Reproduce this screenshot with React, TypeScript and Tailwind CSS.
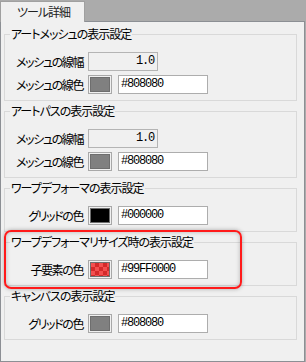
import React from 'react';

const jp = "font-['Noto_Sans_CJK_JP','Noto_Sans',sans-serif] [font-feature-settings:'palt']";
const mono = "font-['Liberation_Mono',monospace] text-[12px] tracking-[-1.2px]";

function Swatch({ fill }: { fill: string }) {
  return (
    <div className="w-[24px] h-[19px] border border-[#a8a8a8] bg-[#f0f0f0] p-[1px] shrink-0">
      <div className={`w-full h-full border border-[#6e6e6e] ${fill}`} />
    </div>
  );
}

function ColorRow({ label, fill, value }: { label: string; fill: string; value: string }) {
  return (
    <div className="flex items-center h-[19px]">
      <div className={`w-[78px] text-right text-[12px] tracking-[-1.4px] leading-[19px] text-black ${jp}`}>{label}</div>
      <div className="ml-[5px] flex items-center gap-[6px]">
        <Swatch fill={fill} />
        <div className={`w-[90px] h-[19px] border border-[#adadad] bg-white pl-[2px] leading-[17px] text-black ${mono}`}>
          {value}
        </div>
      </div>
    </div>
  );
}

function WidthRow({ label, value }: { label: string; value: string }) {
  return (
    <div className="flex items-center h-[19px]">
      <div className={`w-[78px] text-right text-[12px] tracking-[-1.4px] leading-[19px] text-black ${jp}`}>{label}</div>
      <div className={`ml-[5px] w-[70px] h-[19px] border border-[#b4b4b4] bg-[#f0f0f0] pr-[3px] text-right leading-[17px] text-black ${mono}`}>
        {value}
      </div>
    </div>
  );
}

function Group({ title, children }: { title: string; children: React.ReactNode }) {
  return (
    <fieldset className="w-[293px] border border-[#d9d9d9] pt-[11px] pb-[6px] flex flex-col gap-[4px]">
      <legend className={`ml-[5px] px-[1px] text-[12px] tracking-[-1px] leading-[14px] text-black ${jp}`}>{title}</legend>
      {children}
    </fieldset>
  );
}

export default function App() {
  return (
    <div className="relative w-[306px] h-[362px] bg-[#ababab] overflow-hidden">
      {/* tab strip */}
      <div className="h-[22px] flex items-end">
        <div className={`w-[85px] h-[21px] bg-[#f0f0f0] border-t border-l border-r border-[#a0a0a0] pl-[16px] text-[12px] tracking-[-1px] leading-[20px] text-[#222] ${jp}`}>
          ツール詳細
        </div>
      </div>

      {/* panel */}
      <div className="w-[305px] h-[340px] bg-[#f0f0f0] border border-[#8c8f94] border-t-0 pl-[3px] pt-[5px] flex flex-col gap-[3px]">
        <Group title="アートメッシュの表示設定">
          <WidthRow label="メッシュの線幅" value="1.0" />
          <ColorRow label="メッシュの線色" fill="bg-[#808080]" value="#808080" />
        </Group>
        <Group title="アートパスの表示設定">
          <WidthRow label="メッシュの線幅" value="1.0" />
          <ColorRow label="メッシュの線色" fill="bg-[#808080]" value="#808080" />
        </Group>
        <Group title="ワープデフォーマの表示設定">
          <ColorRow label="グリッドの色" fill="bg-[#000000]" value="#000000" />
        </Group>
        <Group title="ワープデフォーマリサイズ時の表示設定">
          <ColorRow
            label="子要素の色"
            fill="bg-[conic-gradient(#d42a2a_25%,#f25050_0_50%,#d42a2a_0_75%,#f25050_0)] [background-size:8px_8px]"
            value="#99FF0000"
          />
        </Group>
        <Group title="キャンバスの表示設定">
          <ColorRow label="グリッドの色" fill="bg-[#808080]" value="#808080" />
        </Group>
      </div>
      {/* panel top border beside the tab */}
      <div className="absolute left-[85px] top-[21px] w-[220px] h-[1px] bg-[#8c8f94]" />

      {/* highlight */}
      <div className="absolute left-[4px] top-[230px] w-[238px] h-[59px] rounded-[7px] border-2 border-[#ff1a1a] shadow-[0_0_4px_rgba(0,0,0,0.3),inset_0_0_4px_rgba(0,0,0,0.25)]" />
    </div>
  );
}
